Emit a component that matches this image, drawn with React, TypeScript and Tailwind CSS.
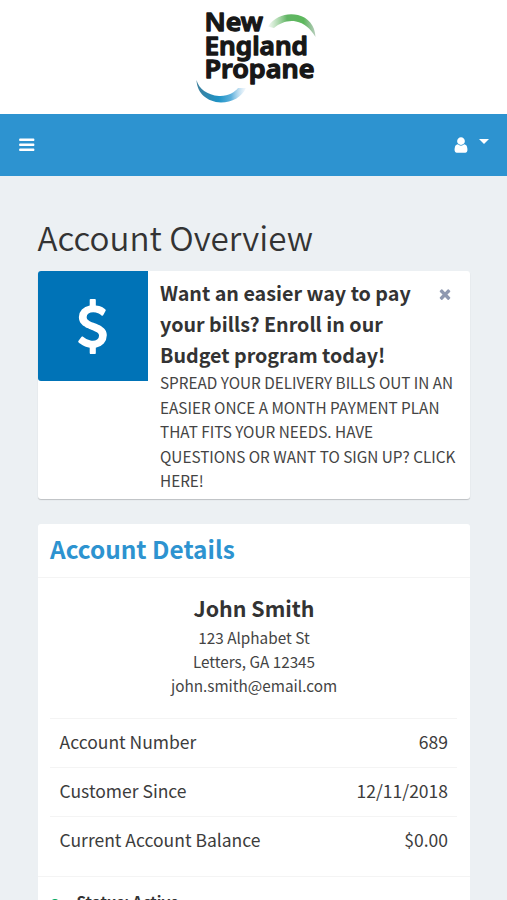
import React from 'react'

interface IconProps {
  className?: string
}

interface DetailRow {
  label: string
  value: string
}

const rows: DetailRow[] = [
  { label: 'Account Number', value: '689' },
  { label: 'Customer Since', value: '12/11/2018' },
  { label: 'Current Account Balance', value: '$0.00' },
]

const BarsIcon: React.FC<IconProps> = ({ className }) => (
  <svg viewBox="0 0 1792 1792" fill="currentColor" className={className}>
    <rect x="128" y="256" width="1536" height="256" rx="64" />
    <rect x="128" y="768" width="1536" height="256" rx="64" />
    <rect x="128" y="1280" width="1536" height="256" rx="64" />
  </svg>
)

const UserIcon: React.FC<IconProps> = ({ className }) => (
  <svg viewBox="0 0 1792 1792" fill="currentColor" className={className}>
    <path d="M1536 1399q0 109-62.5 187t-150.5 78h-854q-88 0-150.5-78t-62.5-187q0-85 8.5-160.5t31.5-152 58.5-131 94-89 134.5-34.5q131 128 313 128t313-128q76 0 134.5 34.5t94 89 58.5 131 31.5 152 8.5 160.5zm-256-887q0 159-112.5 271.5t-271.5 112.5-271.5-112.5-112.5-271.5 112.5-271.5 271.5-112.5 271.5 112.5 112.5 271.5z" />
  </svg>
)

const CloseIcon: React.FC<IconProps> = ({ className }) => (
  <svg viewBox="0 0 1792 1792" fill="currentColor" className={className}>
    <path d="M1490 1322q0 40-28 68l-136 136q-28 28-68 28t-68-28l-294-294-294 294q-28 28-68 28t-68-28l-136-136q-28-28-28-68t28-68l294-294-294-294q-28-28-28-68t28-68l136-136q28-28 68-28t68 28l294 294 294-294q28-28 68-28t68 28l136 136q28 28 28 68t-28 68l-294 294 294 294q28 28 28 68z" />
  </svg>
)

const DollarIcon: React.FC<IconProps> = ({ className }) => (
  <svg viewBox="0 0 1792 1792" fill="currentColor" className={className}>
    <path d="M1362 1185q0 153-99.5 263.5t-258.5 136.5v175q0 14-9 23t-23 9h-135q-13 0-22.5-9.5t-9.5-22.5v-175q-66-9-127.5-31t-101.5-44.5-74-48-46.5-37.5-17.5-18q-17-21-2-41l103-135q7-10 23-12 15-2 24 9l2 2q113 99 243 125 37 8 74 8 81 0 142.5-43t61.5-122q0-28-15-53t-33.5-42-58.5-37.5-66-32-80-32.5q-39-16-61.5-25t-61.5-26.5-62.5-31-56.5-35.5-53.5-42.5-43.5-49-35.5-58-21-66.5-8.5-78q0-138 98-242t255-134v-180q0-13 9.5-22.5t22.5-9.5h135q14 0 23 9t9 23v176q57 6 110.5 23t87 33.5 63.5 37.5 39 29 15 14q17 18 5 38l-81 146q-8 15-23 16-14 3-27-7-3-3-14.5-12t-39-26.5-58.5-32-74.5-26-85.5-11.5q-95 0-155 43t-60 111q0 26 8.5 48t29.5 41.5 39.5 33 56 31 60.5 27 70 27.5q53 20 81 31.5t76 35 75.5 42.5 62 50 53 63.5 31.5 76.5 13 94z" />
  </svg>
)

const Logo: React.FC = () => (
  <svg width="130" height="104" viewBox="190 4 130 104" className="shrink-0">
    <defs>
      <linearGradient id="green" x1="0" x2="1">
        <stop offset="0" stopColor="#8cc98a" stopOpacity="0.1" />
        <stop offset="0.4" stopColor="#62b565" />
        <stop offset="0.75" stopColor="#5cb85c" />
        <stop offset="1" stopColor="#6f9f78" stopOpacity="0.5" />
      </linearGradient>
      <linearGradient id="blue" x1="0" x2="1">
        <stop offset="0" stopColor="#3d7f9c" />
        <stop offset="0.45" stopColor="#1e93c6" />
        <stop offset="0.7" stopColor="#5db0dc" />
        <stop offset="1" stopColor="#b5d6ee" stopOpacity="0.15" />
      </linearGradient>
    </defs>
    <path d="M268 26.500C275 16 287 12.500 298 15C308 17.500 315 25 315.500 37C310 28 304 23 296 21.500C288 20 280 23 274 28Z" fill="url(#green)" />
    <path d="M196.500 80C199 89 207 95 219 96C228 96.500 235 92 238 88H246C242 97 232 102.500 221 102.500C207 102 197 93 196.500 80Z" fill="url(#blue)" />
    <g
      fill="#171717"
      stroke="#171717"
      strokeWidth="1.3"
      strokeLinejoin="round"
      fontFamily="Noto Sans, sans-serif"
      fontWeight="600"
      fontSize="26"
    >
      <text x="204.500" y="31" textLength="58.500" lengthAdjust="spacingAndGlyphs">New</text>
      <text x="204.500" y="54.500" textLength="103.500" lengthAdjust="spacingAndGlyphs">England</text>
      <text x="204.500" y="78" textLength="110" lengthAdjust="spacingAndGlyphs">Propane</text>
    </g>
  </svg>
)

export default function App() {
  return (
    <div className="h-[900px] w-full overflow-hidden bg-[#ecf0f3] font-['Noto_Sans_CJK_SC',sans-serif] text-[#333]">
      <header>
        <div className="flex h-[114px] justify-center bg-white pt-1 pl-[3px]">
          <Logo />
        </div>
        <nav className="flex h-[61.5px] items-center justify-between bg-[#2d93d0] pr-[18px] pl-[18px] text-white">
          <BarsIcon className="size-[17.5px]" />
          <div className="flex items-center gap-[9px]">
            <UserIcon className="size-[18px]" />
            <span className="mb-1.5 border-x-5 border-t-5 border-x-transparent border-t-white" />
          </div>
        </nav>
      </header>

      <main className="px-[37.5px] pt-[37.5px]">
        <h1 className="h-[58px] text-[33.2px] leading-[48px] font-[350] whitespace-nowrap">Account Overview</h1>

        {/* Promo */}
        <section className="flex h-[228px] rounded-[3px] bg-white shadow-[0_1px_1px_rgba(0,0,0,0.2)]">
          <div className="flex size-[110px] shrink-0 items-center justify-center rounded-l-[3px] bg-[#0073b7] text-white">
            <DollarIcon className="size-[55px]" />
          </div>
          <div className="min-w-0 flex-1 pt-[5.5px] pl-[12.5px]">
            <div className="flex justify-between pr-[17px]">
              <h2 className="text-[19.7px] leading-[31.3px] font-bold whitespace-nowrap">
                Want an easier way to pay
                <br />
                your bills? Enroll in our
                <br />
                Budget program today!
              </h2>
              <CloseIcon className="mt-[9.5px] size-4 text-[#8e98b0]" />
            </div>
            <p className="text-[15.3px] leading-[24.4px] whitespace-nowrap text-[#444] uppercase">
              Spread your delivery bills out in an
              <br />
              easier once a month payment plan
              <br />
              that fits your needs. Have
              <br />
              questions or want to sign up? Click
              <br />
              here!
            </p>
          </div>
        </section>

        {/* Account details */}
        <section className="mt-[25px] rounded-t-[3px] bg-white">
          <div className="h-[54px] border-b border-[#f4f4f4] px-[12.5px]">
            <h3 className="text-[24.4px] leading-[50px] font-bold text-[#2d93d0]">Account Details</h3>
          </div>
          <div className="h-[140px] pt-[12.5px] pl-px text-center">
            <h4 className="text-[21.4px] leading-[34px] font-bold">John Smith</h4>
            <p className="text-[15.3px] leading-[24.4px] text-[#444]">
              123 Alphabet St
              <br />
              Letters, GA 12345
              <br />
              john.smith@email.com
            </p>
          </div>
          <ul className="mx-[12.5px] h-[158px]">
            {rows.map((row) => (
              <li
                key={row.label}
                className="flex h-[49px] items-center justify-between border-t border-[#f4f4f4] pr-[9px] pb-[2px] pl-[9.5px] text-[17.5px] leading-6 text-[#3c3c3c]"
              >
                <span>{row.label}</span>
                <span>{row.value}</span>
              </li>
            ))}
          </ul>
          <div className="flex h-20 items-start border-t border-[#f4f4f4] pt-3 pl-3">
            <span className="mt-2.5 mr-[17px] size-[10px] rounded-full bg-[#00a65a]" />
            <span className="text-[15.3px] leading-6 font-bold">Status: Active</span>
          </div>
        </section>
      </main>
    </div>
  )
}
